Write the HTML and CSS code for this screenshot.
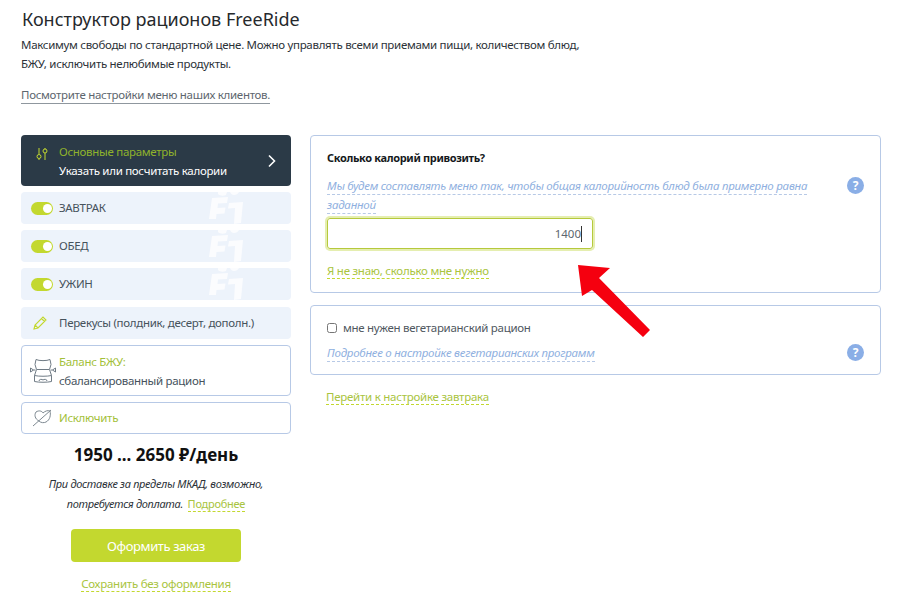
FILE: index.html
```html
<!DOCTYPE html>
<html lang="ru">
<head>
    <meta charset="UTF-8">
    <title>Конструктор рационов FreeRide</title>
    <link rel="stylesheet" href="styles.css">
</head>
<body>
    <svg class="defs" width="0" height="0">
        <symbol id="mark" viewBox="0 0 40 32">
            <path d="M13 0h9l-1 3c-3 1-6 1-8-1zM25 0h9c-1 2-3 3-5 3-2 0-3-1-4-3zM7 6l16-1-1 6-9 .500-.500 4.500 8-.500-1 6-8 .500-.500 5H4zM24 11l14-1-2 21-7 1 1-16-7 .500z" fill="#fff"/>
        </symbol>
    </svg>

    <header class="intro">
        <h1>Конструктор рационов FreeRide</h1>
        <p>Максимум свободы по стандартной цене. Можно управлять всеми приемами пищи, количеством блюд,<br>БЖУ, исключить нелюбимые продукты.</p>
        <a class="clients-link" href="#">Посмотрите настройки меню наших клиентов.</a>
    </header>

    <div class="builder">
        <aside class="sidebar">
            <div class="side-item side-dark">
                <svg class="ico" width="12" height="14" viewBox="0 0 12 14" fill="none" stroke="#c3d82f" stroke-width="1">
                    <path d="M3 1v6M9 6v7M3 12v1M9 1v1"/><circle cx="3" cy="9.500" r="2"/><circle cx="9" cy="4" r="2"/>
                </svg>
                <div class="side-text">
                    <div class="accent">Основные параметры</div>
                    <div>Указать или посчитать калории</div>
                </div>
                <svg class="chevron" width="10" height="14" viewBox="0 0 10 14" fill="none" stroke="#fff" stroke-width="1.600"><path d="M2 1.500l5.500 5.500L2 12.500"/></svg>
            </div>

            <div class="side-item side-meal">
                <svg class="mark" width="40" height="32"><use href="#mark"/></svg>
                <span class="toggle"></span><span>ЗАВТРАК</span>
            </div>
            <div class="side-item side-meal">
                <svg class="mark" width="40" height="32"><use href="#mark"/></svg>
                <span class="toggle"></span><span>ОБЕД</span>
            </div>
            <div class="side-item side-meal">
                <svg class="mark" width="40" height="32"><use href="#mark"/></svg>
                <span class="toggle"></span><span>УЖИН</span>
            </div>
            <div class="side-item side-meal side-snack">
                <svg class="ico" width="16" height="16" viewBox="0 0 16 16" fill="none" stroke="#c3d82f" stroke-width="1.100">
                    <path d="M2 14l1-4 8-8 3 3-8 8zM3 10l3 3M9.500 3.500l3 3"/>
                </svg>
                <span>Перекусы (полдник, десерт, дополн.)</span>
            </div>

            <div class="side-item side-line side-balance">
                <svg class="ico-body" width="26" height="24" viewBox="0 0 26 24" fill="none" stroke="#6f7b85" stroke-width="1">
                    <path d="M6 .500c3 1.500 11 1.500 14 0l1 5-1.500 5 2 6v6c-4 1-13 1-17 0v-6l2-6-1.500-5zM7 10.500h12M4.500 16.500c4 1 13 1 17 0M9 22c0-2 3-2 4-1 1-1 4-1 4 1"/>
                    <path d="M.500 9v4l3-2zM25.500 9v4l-3-2zM3.500 11h2M20.500 11h2"/>
                </svg>
                <div class="side-text">
                    <div class="accent">Баланс БЖУ:</div>
                    <div>сбалансированный рацион</div>
                </div>
            </div>
            <div class="side-item side-line side-exclude">
                <svg class="ico-body" width="20" height="18" viewBox="0 0 20 18" fill="none" stroke="#7d8890" stroke-width="1">
                    <path d="M4 3c3-2 6-1 7 1 2-2 5-3 7-2 1 4 0 9-4 11-2 1-5 1-7-1C3 10 2 6 4 3zM1 17L19 1"/>
                </svg>
                <span class="accent">Исключить</span>
            </div>

            <div class="price">1950 ... 2650 ₽/день</div>
            <p class="note">При доставке за пределы МКАД, возможно,<br>потребуется доплата. <a class="dash-green note-link" href="#">Подробнее</a></p>
            <button class="order-btn">Оформить заказ</button>
            <a class="dash-green save-link" href="#">Сохранить без оформления</a>
        </aside>

        <main class="content">
            <section class="panel panel-calories">
                <h2>Сколько калорий привозить?</h2>
                <div class="hint-row">
                    <div><a class="dash-blue" href="#">Мы будем составлять меню так, чтобы общая калорийность блюд была примерно равна заданной</a></div>
                    <span class="help">?</span>
                </div>
                <div class="calories-input"><span>1400</span><i class="caret"></i></div>
                <a class="dash-green" href="#">Я не знаю, сколько мне нужно</a>
            </section>

            <section class="panel panel-veg">
                <label class="veg-check"><input type="checkbox"> мне нужен вегетарианский рацион</label>
                <div class="hint-row">
                    <div><a class="dash-blue" href="#">Подробнее о настройке вегетарианских программ</a></div>
                    <span class="help">?</span>
                </div>
            </section>

            <a class="dash-green next-link" href="#">Перейти к настройке завтрака</a>
        </main>
    </div>

    <!-- стрелка поверх скриншота -->
    <svg class="arrow" width="80" height="80" viewBox="0 0 80 80">
        <path d="M4 3L36 6 25 16 76 68 69 75 18 28 8 34z" fill="#f5000f"/>
    </svg>
</body>
</html>
```

FILE: styles.css
```css
* { box-sizing: border-box; }

body {
    margin: 0;
    padding: 6px 19px 0 21px;
    width: 900px;
    height: 600px;
    overflow: hidden;
    position: relative;
    background: #fff;
    color: #333d45;
    font-family: "Noto Sans", Arial, sans-serif;
    font-size: 11.500px;
    letter-spacing: -0.3px;
    line-height: 20px;
}

a { text-decoration: none; }

.defs { position: absolute; }

/* шапка */
.intro h1 {
    margin: 0;
    padding-left: 1px;
    font-size: 18px;
    letter-spacing: 0;
    line-height: 26px;
    font-weight: 400;
    color: #26292c;
}

.intro p {
    margin: 4px 0 0;
    line-height: 18.500px;
    color: #2c3238;
}

.clients-link {
    display: inline-block;
    margin-top: 14px;
    line-height: 16px;
    color: #5d666e;
    border-bottom: 1px solid #8f979e;
}

.builder {
    display: flex;
    gap: 19px;
    margin-top: 30px;
}

/* левая колонка */
.sidebar {
    width: 270px;
    flex: none;
    display: flex;
    flex-direction: column;
    align-items: center;
}

.side-item {
    width: 100%;
    display: flex;
    align-items: center;
    border-radius: 4px;
    position: relative;
    overflow: hidden;
}

.side-dark {
    height: 51px;
    background: #2b3a47;
    color: #fff;
    padding: 0 14px 0 15px;
    margin-bottom: 6px;
}

.side-dark .side-text { margin-left: 11px; flex: 1; line-height: 19px; }
.side-dark .accent { color: #8fb22c; }
.side-dark .ico { margin-top: -14px; }

.side-meal {
    height: 32px;
    background: #edf3fb;
    margin-bottom: 6px;
    padding-left: 10px;
    color: #46525c;
}

.side-snack { margin-top: 1px; }
.side-snack .ico { margin-left: 1px; margin-right: 11px; }

.toggle {
    width: 22px;
    height: 13px;
    border-radius: 7px;
    background: #c3d82f;
    margin-right: 6px;
    position: relative;
    flex: none;
}

.toggle::after {
    content: "";
    position: absolute;
    right: 1.500px;
    top: 2px;
    width: 9px;
    height: 9px;
    border-radius: 50%;
    background: #fff;
}

.mark {
    position: absolute;
    left: 184px;
    top: 0;
    opacity: .75;
}

.side-line {
    border: 1px solid #b7c9e6;
    background: #fff;
    padding-left: 11px;
    color: #46525c;
}

.side-line .accent { color: #a3bf3a; }

.side-balance {
    height: 51px;
    margin-bottom: 6px;
    padding-left: 8px;
}

.side-balance .side-text { margin-left: 3px; line-height: 19px; }

.side-exclude { height: 32px; }
.side-exclude .ico-body { margin-right: 7px; margin-left: -1px; }

.price {
    margin-top: 9px;
    font-size: 17px;
    letter-spacing: 0;
    line-height: 24px;
    font-weight: 700;
    color: #111;
}

.note {
    margin: 7px 0 0;
    font-size: 11px;
    font-style: italic;
    line-height: 20px;
    text-align: center;
    color: #2c3238;
}

.note-link { font-style: normal; margin-left: 2px; }

.order-btn {
    width: 170px;
    height: 33px;
    margin-top: 15px;
    border: 0;
    border-radius: 4px;
    background: #c3d82f;
    color: #fff;
    font: 13px "Noto Sans", Arial, sans-serif;
    letter-spacing: -0.4px;
}

.save-link { margin-top: 14px; }

/* правая колонка */
.content {
    width: 571px;
    flex: none;
}

.panel {
    border: 1px solid #b7c9e6;
    border-radius: 4px;
    padding: 0 16px;
}

.panel-calories { height: 158px; padding-top: 12px; }
.panel-veg { height: 70px; padding-top: 12px; margin-top: 12px; }

h2 {
    margin: 0 0 8px;
    font-size: 11px;
    letter-spacing: -0.35px;
    line-height: 20px;
    font-weight: 700;
    color: #15191c;
}

.hint-row {
    display: flex;
    align-items: flex-start;
    justify-content: space-between;
    gap: 30px;
    font-style: italic;
    line-height: 19px;
    letter-spacing: -0.23px;
}

.panel-veg .hint-row { margin-top: 5px; }

.help {
    flex: none;
    width: 17px;
    height: 17px;
    margin-top: 1px;
    border-radius: 50%;
    background: #8aaee6;
    color: #fff;
    font-style: normal;
    font-weight: 700;
    font-size: 12px;
    letter-spacing: 0;
    line-height: 17px;
    text-align: center;
}

.dash-blue {
    color: #8fb0e0;
    padding-bottom: 1px;
    border-bottom: 1px dashed #b7c9e6;
}

.dash-green {
    color: #a9c440;
    border-bottom: 1px dashed #c3d82f;
    letter-spacing: -0.25px;
    line-height: 15px;
    display: inline-block;
}

.calories-input {
    width: 266px;
    height: 31px;
    margin: 4px 0 12px;
    padding-right: 10px;
    display: flex;
    align-items: center;
    justify-content: flex-end;
    border: 1px solid #b6c93c;
    border-radius: 3px;
    box-shadow: 0 0 0 2px #e5eeb0;
    color: #5d666e;
    letter-spacing: 0;
}

.caret {
    width: 1px;
    height: 16px;
    background: #333;
}

.veg-check {
    display: flex;
    align-items: center;
    color: #50585f;
    gap: 6px;
}

.veg-check input {
    margin: 0;
    width: 10px;
    height: 10px;
    accent-color: #666;
}

.next-link { margin: 14px 0 0 16px; }

.arrow {
    position: absolute;
    left: 574px;
    top: 262px;
}
```
